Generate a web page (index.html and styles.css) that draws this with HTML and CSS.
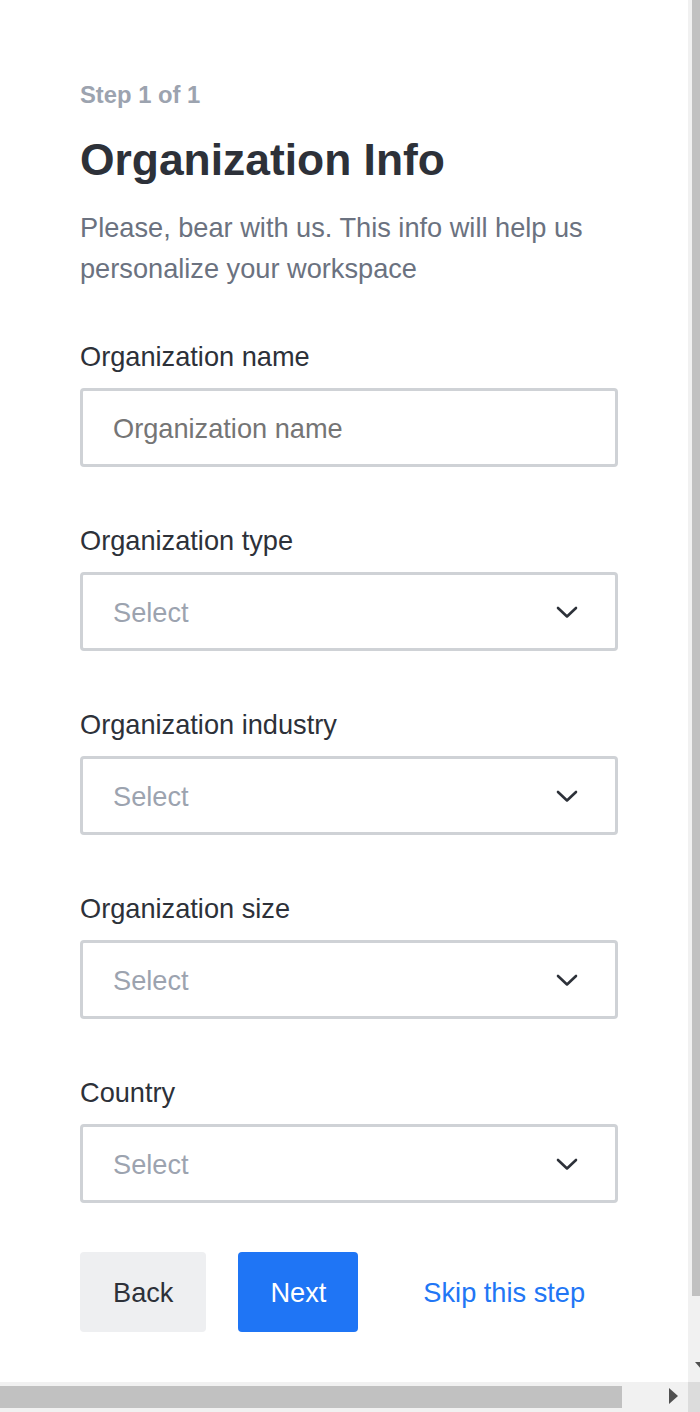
FILE: index.html
```html
<!DOCTYPE html>
<html lang="en">
<head>
<meta charset="utf-8">
<title>Organization Info</title>
<link rel="stylesheet" href="styles.css">
</head>
<body>
<div class="viewport">
  <main class="page">
    <p class="step">Step 1 of 1</p>
    <h1 class="title">Organization Info</h1>
    <p class="desc">Please, bear with us. This info will help us personalize your workspace</p>
    <form class="form">
      <div class="field">
        <label class="label" for="orgname">Organization name</label>
        <input class="input" id="orgname" type="text" placeholder="Organization name">
      </div>
      <div class="field">
        <span class="label">Organization type</span>
        <div class="select"><span class="select-text">Select</span><svg class="chev" width="22" height="13" viewBox="0 0 22 13"><path d="M2 2 L11 10.5 L20 2" fill="none" stroke="#2d3139" stroke-width="2.6" stroke-linecap="round" stroke-linejoin="round"/></svg></div>
      </div>
      <div class="field">
        <span class="label">Organization industry</span>
        <div class="select"><span class="select-text">Select</span><svg class="chev" width="22" height="13" viewBox="0 0 22 13"><path d="M2 2 L11 10.5 L20 2" fill="none" stroke="#2d3139" stroke-width="2.6" stroke-linecap="round" stroke-linejoin="round"/></svg></div>
      </div>
      <div class="field">
        <span class="label">Organization size</span>
        <div class="select"><span class="select-text">Select</span><svg class="chev" width="22" height="13" viewBox="0 0 22 13"><path d="M2 2 L11 10.5 L20 2" fill="none" stroke="#2d3139" stroke-width="2.6" stroke-linecap="round" stroke-linejoin="round"/></svg></div>
      </div>
      <div class="field">
        <span class="label">Country</span>
        <div class="select"><span class="select-text">Select</span><svg class="chev" width="22" height="13" viewBox="0 0 22 13"><path d="M2 2 L11 10.5 L20 2" fill="none" stroke="#2d3139" stroke-width="2.6" stroke-linecap="round" stroke-linejoin="round"/></svg></div>
      </div>
      <div class="actions">
        <button type="button" class="btn btn-back">Back</button>
        <button type="button" class="btn btn-next">Next</button>
        <button type="button" class="btn btn-skip">Skip this step</button>
      </div>
    </form>
  </main>
</div>
<div class="vscroll" aria-hidden="true">
  <div class="vthumb"></div>
  <div class="track"></div>
  <div class="vbutton"><svg width="12" height="30" viewBox="0 0 12 30"><polygon points="7,10 23,10 15,19" fill="#505050"/></svg></div>
</div>
<div class="hscroll" aria-hidden="true">
  <div class="hthumb"></div>
  <div class="track"></div>
  <div class="hbutton"><svg width="30" height="30" viewBox="0 0 30 30"><polygon points="11,6 20,14 11,22" fill="#505050"/></svg></div>
</div>
<div class="corner" aria-hidden="true"></div>
</body>
</html>
```

FILE: styles.css
```css
html, body {
  margin: 0;
  padding: 0;
  background: #ffffff;
}

body {
  width: 700px;
  height: 1412px;
  overflow: hidden;
  display: grid;
  grid-template-columns: 688px 12px;
  grid-template-rows: 1382px 30px;
  font-family: "Liberation Sans", Arial, sans-serif;
  color: #2d3139;
}

.viewport {
  overflow: hidden;
  background: #ffffff;
}

/* faux scrollbars */
.vscroll {
  display: flex;
  flex-direction: column;
  background: #f1f1f1;
  overflow: hidden;
}

.vthumb {
  height: 1296px;
  margin-left: 4px;
  background: #c1c1c1;
  flex: none;
}

.track {
  flex: 1;
}

.vbutton {
  height: 30px;
  flex: none;
}

.vbutton svg,
.hbutton svg {
  display: block;
}

.hscroll {
  display: flex;
  background: #f1f1f1;
}

.hthumb {
  width: 622px;
  margin: 4px 0;
  background: #c1c1c1;
  flex: none;
}

.hbutton {
  width: 30px;
  flex: none;
}

.corner {
  background: #dcdcdc;
}

/* page */
.page {
  box-sizing: border-box;
  width: 728px;
  padding: 76.6px 0 0 80px;
  display: flex;
  flex-direction: column;
}

.step {
  margin: 0;
  font-size: 23.8px;
  line-height: 35.7px;
  font-weight: 700;
  color: #9ca3af;
}

.title {
  margin: 20.9px 0 0;
  font-size: 44.4px;
  line-height: 53px;
  font-weight: 700;
  color: #2d3139;
}

.desc {
  margin: 22.2px 0 0;
  width: 538px;
  font-size: 27.2px;
  line-height: 40.8px;
  color: #6b7280;
}

.form {
  margin: 46.9px 0 0;
  width: 538px;
  display: flex;
  flex-direction: column;
  gap: 53.6px;
}

.field {
  display: flex;
  flex-direction: column;
  gap: 10.6px;
}

.label {
  display: block;
  font-size: 27.2px;
  line-height: 40.8px;
  color: #2d3139;
}

.input,
.select {
  box-sizing: border-box;
  width: 538px;
  height: 79px;
  margin: 0;
  border: 3px solid #cfd2d6;
  border-radius: 4px;
  background: #ffffff;
  padding: 2px 0 0 30px;
  font-family: "Liberation Sans", Arial, sans-serif;
  font-size: 27.2px;
  color: #2d3139;
  outline: none;
}

.input::placeholder {
  color: #757575;
  opacity: 1;
}

.select {
  display: flex;
  align-items: center;
  justify-content: space-between;
  padding-right: 37px;
}

.select-text {
  color: #9ca3af;
  line-height: 40px;
}

.chev {
  display: block;
  flex: none;
}

.actions {
  margin-top: -4.9px;
  display: flex;
  gap: 32px;
}

.btn {
  flex: none;
  height: 80px;
  padding: 2px 33px 0;
  border: 0;
  border-radius: 4px;
  font-family: "Liberation Sans", Arial, sans-serif;
  font-size: 27.2px;
  white-space: nowrap;
  cursor: pointer;
}

.btn-back {
  background: #eeeff1;
  color: #2d3139;
}

.btn-next {
  background: #1f75f5;
  color: #ffffff;
  padding: 2px 32px 0;
}

.btn-skip {
  background: transparent;
  color: #2176f5;
}
```
